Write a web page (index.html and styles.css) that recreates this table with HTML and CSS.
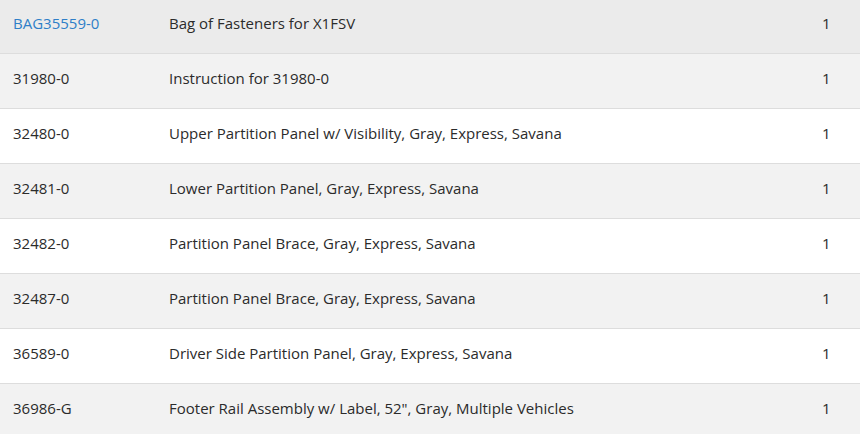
FILE: index.html
```html
<!DOCTYPE html>
<html>
<head>
<meta charset="utf-8">
<link rel="stylesheet" href="styles.css">
</head>
<body>
<table class="parts">
  <colgroup>
    <col class="col-part">
    <col class="col-desc">
    <col class="col-qty">
  </colgroup>
  <tbody>
    <tr class="hover"><td><a href="#" class="part-link">BAG35559-0</a></td><td>Bag of Fasteners for X1FSV</td><td>1</td></tr>
    <tr class="stripe"><td>31980-0</td><td>Instruction for 31980-0</td><td>1</td></tr>
    <tr><td>32480-0</td><td>Upper Partition Panel w/ Visibility, Gray, Express, Savana</td><td>1</td></tr>
    <tr class="stripe"><td>32481-0</td><td>Lower Partition Panel, Gray, Express, Savana</td><td>1</td></tr>
    <tr><td>32482-0</td><td>Partition Panel Brace, Gray, Express, Savana</td><td>1</td></tr>
    <tr class="stripe"><td>32487-0</td><td>Partition Panel Brace, Gray, Express, Savana</td><td>1</td></tr>
    <tr><td>36589-0</td><td>Driver Side Partition Panel, Gray, Express, Savana</td><td>1</td></tr>
    <tr class="stripe"><td>36986-G</td><td>Footer Rail Assembly w/ Label, 52", Gray, Multiple Vehicles</td><td>1</td></tr>
  </tbody>
</table>
</body>
</html>
```
FILE: styles.css
```css
html, body {
  margin: 0;
  padding: 0;
  background: #ffffff;
}
body {
  font-family: "Open Sans", "Noto Sans", sans-serif;
  font-size: 15px;
  color: #2b2b2b;
}
.parts {
  width: 860px;
  border-collapse: collapse;
  margin-top: -2px;
  table-layout: fixed;
}
.col-part { width: 156px; }
.col-desc { width: 653px; }
.col-qty { width: 51px; }
.parts td {
  border-top: 1px solid #dddddd;
  height: 55px;
  padding: 0 12px 7px 13px;
  box-sizing: border-box;
  vertical-align: middle;
  line-height: 20px;
  white-space: nowrap;
}
.parts tr.stripe td { background: #f2f2f2; }
.parts tr.hover td { background: #ebebeb; }
.part-link {
  color: #2e7fc8;
  text-decoration: none;
}
```
